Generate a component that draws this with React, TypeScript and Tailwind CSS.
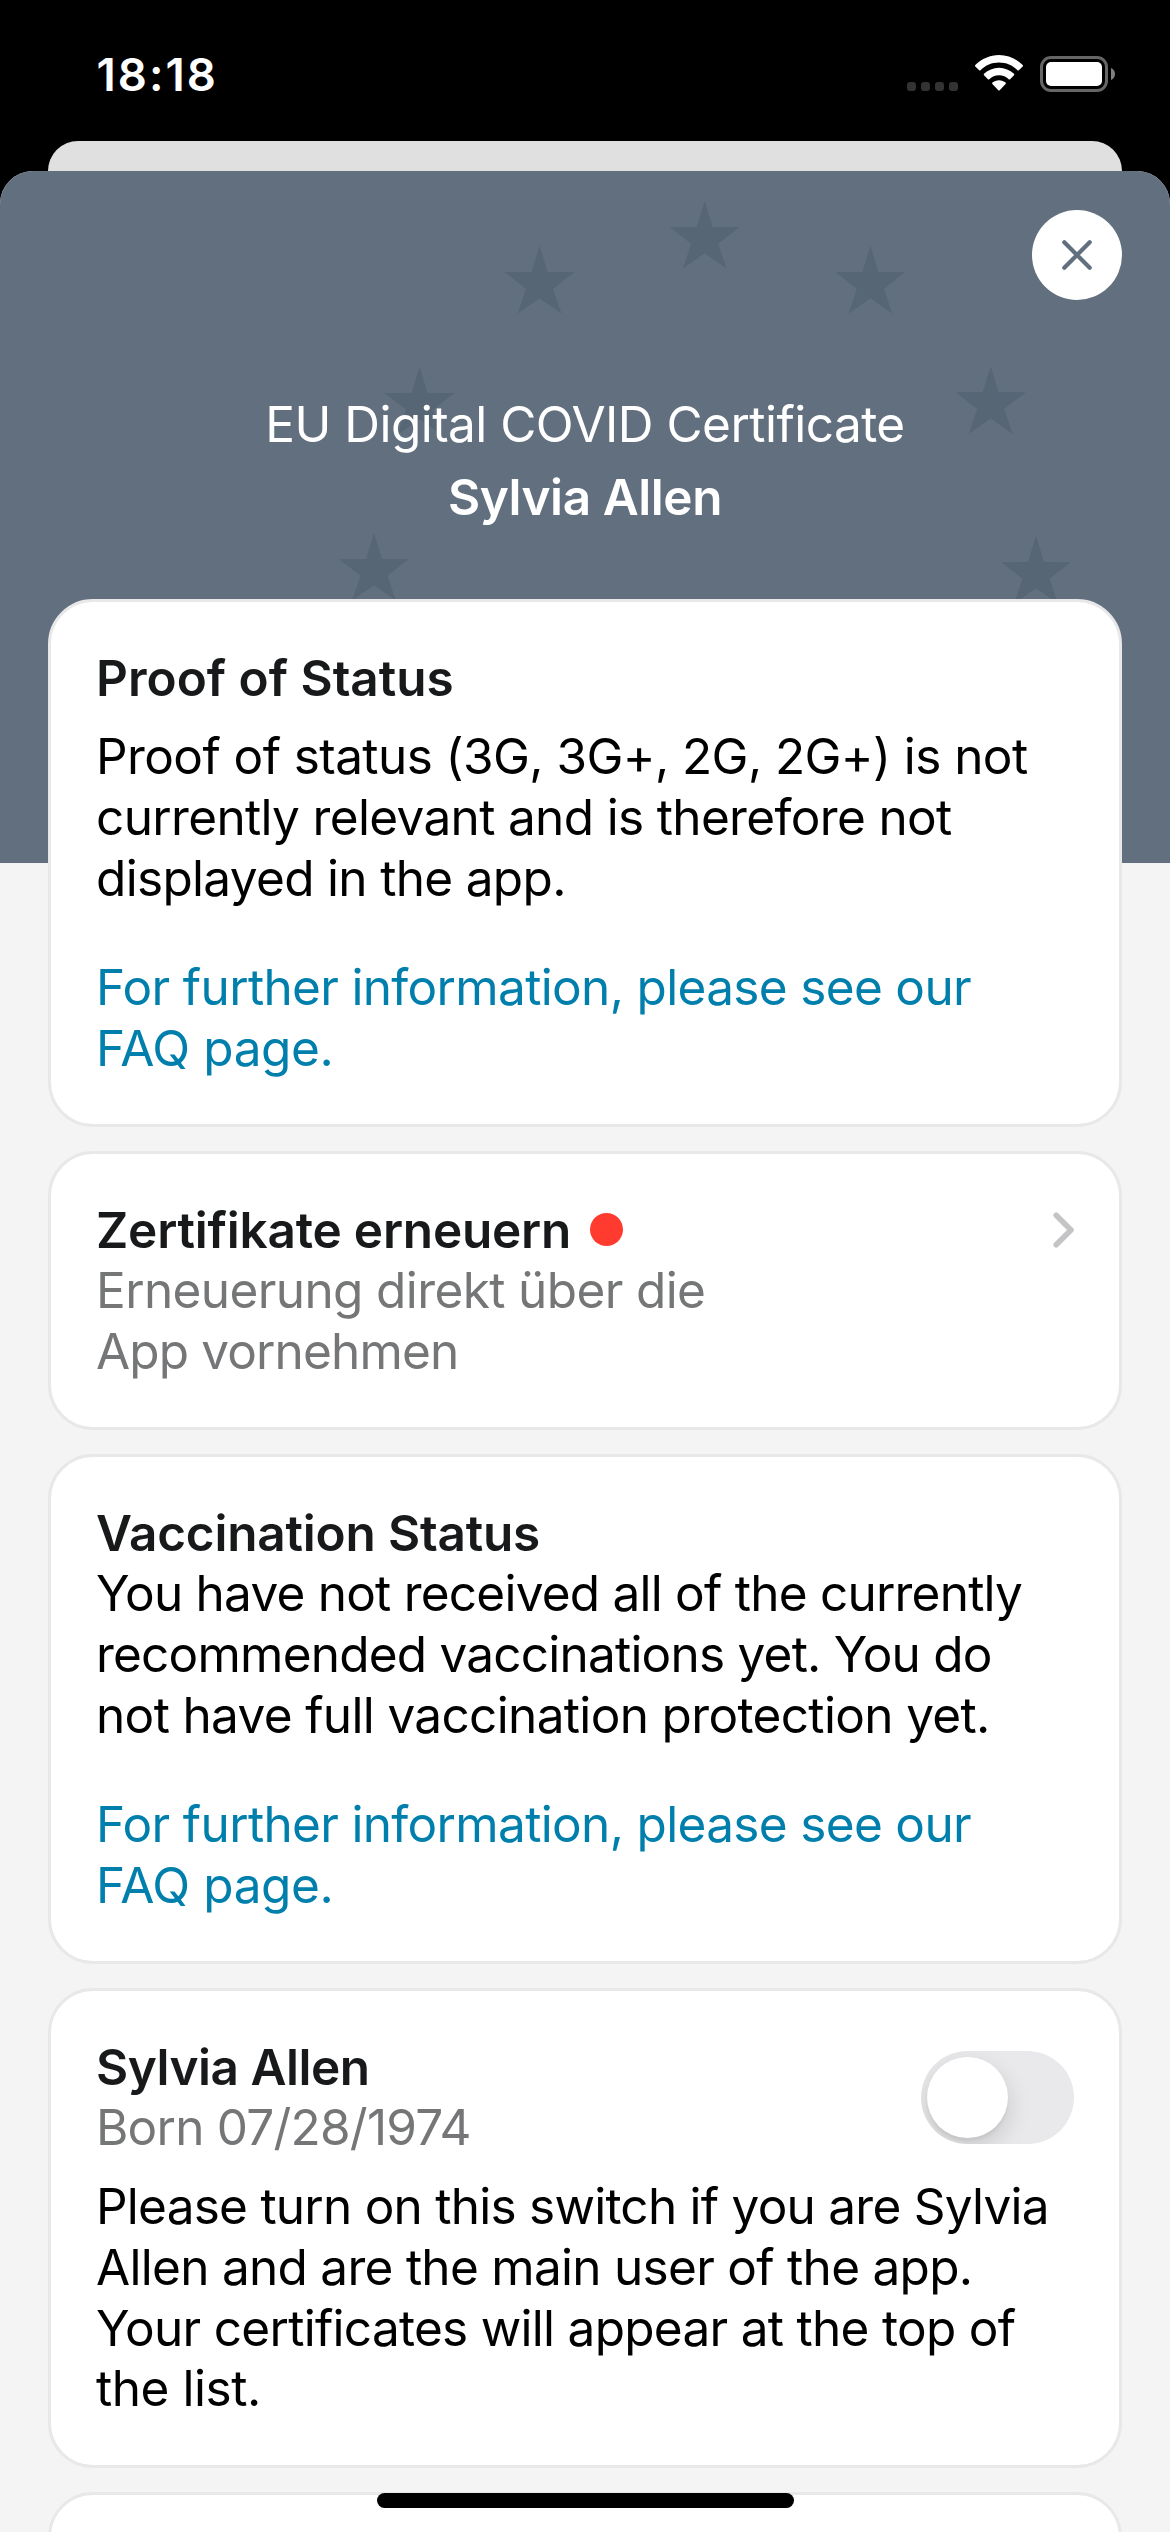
import type { ReactNode } from "react";

const STARS: [number, number][] = [
  [704.7, 30],
  [539.6, 75],
  [870.4, 75],
  [419.5, 196],
  [990.7, 195.3],
  [374, 362],
  [1036, 365],
];

function StarField() {
  return (
    <svg className="absolute inset-0" width="1170" height="692" viewBox="0 0 1170 692" fill="#566675" aria-hidden="true">
      {STARS.map(([x, y]) => (
        <polygon
          key={`${x}-${y}`}
          transform={`translate(${x} ${y})`}
          points="0,0 8,26 35,26 13.5,42.8 21.8,67.5 0,52.3 -21.8,67.5 -13.5,42.8 -35,26 -8,26"
        />
      ))}
    </svg>
  );
}

function StatusBar() {
  return (
    <div className="flex h-[141px] shrink-0 items-start justify-between pl-[96.5px] pr-[55px] text-white">
      <div className="mt-[50px] text-[45.5px] font-semibold leading-[50px] tracking-[2.05px]">18:18</div>
      <div className="mt-[55px] flex items-start">
        <div className="mt-[27px] flex gap-[5px]">
          <span className="h-[9px] w-[9px] rounded-[3px] bg-[#333333]" />
          <span className="h-[9px] w-[9px] rounded-[3px] bg-[#333333]" />
          <span className="h-[9px] w-[9px] rounded-[3px] bg-[#333333]" />
          <span className="h-[9px] w-[9px] rounded-[3px] bg-[#333333]" />
        </div>
        <svg className="ml-[17px]" width="48" height="36" viewBox="0 0 48 36" fill="#fff" aria-hidden="true">
          <path d="M24 7.6c7.1 0 13.6 2.7 18.5 7.7.4.4 1 .4 1.3 0l3.9-3.9c.4-.4.4-1 0-1.4C41.3 3.7 32.8 0 24 0S6.7 3.7.3 10c-.4.4-.4 1 0 1.4l3.9 3.9c.4.4 1 .4 1.3 0C10.4 10.3 16.900 7.6 24 7.6z" />
          <path d="M24 20.3c3.9 0 7.1 1.4 9.7 3.9.4.4 1 .4 1.4 0l3.9-4c.4-.4.4-1 0-1.4C34.9 15 29.7 12.7 24 12.7S13.100 15 9 18.8c-.4.4-.4 1 0 1.4l3.9 4c.4.4 1 .4 1.4 0 2.6-2.5 5.800-3.9 9.700-3.9z" />
          <path d="M30.600 29c.4-.4.4-1 0-1.4-1.7-1.5-4-2.4-6.600-2.4s-4.9.9-6.600 2.4c-.4.4-.4 1 0 1.4l5.900 6.300c.4.4 1 .4 1.4 0z" />
        </svg>
        <svg className="ml-[17px] mt-px" width="75" height="36" viewBox="0 0 75 36" aria-hidden="true">
          <rect x="1.5" y="1.5" width="65" height="33" rx="9.5" fill="none" stroke="#666666" strokeWidth="3" />
          <rect x="6" y="6" width="56" height="24" rx="5" fill="#fff" />
          <path d="M71 12c2.6 1.1 4 3.4 4 6s-1.4 4.9-4 6z" fill="#808080" />
        </svg>
      </div>
    </div>
  );
}

function Card({ className, children }: { className: string; children?: ReactNode }) {
  return (
    <section className={`shrink-0 rounded-[45px] border-[3px] border-[#e8e8e8] bg-white px-[45px] pt-[45.5px] ${className}`}>
      {children}
    </section>
  );
}

function Line({ className, children }: { className: string; children: ReactNode }) {
  return <span className={`block whitespace-nowrap ${className}`}>{children}</span>;
}

function FaqLink() {
  return (
    <a className="mt-[48.5px] block text-[#007fad]">
      <Line className="tracking-[-0.66px]">For further information, please see our</Line>
      <Line className="tracking-[-0.42px]">FAQ page.</Line>
    </a>
  );
}

export default function App() {
  return (
    <div className="relative flex h-[2532px] w-[1170px] flex-col overflow-hidden bg-black font-['Inter',sans-serif] text-[49.5px] leading-[60.8px] text-black">
      <StatusBar />
      <div className="mx-[48px] h-[30px] shrink-0 rounded-t-[30px] bg-[#e0e0e0]" />
      <div className="relative flex min-h-0 grow flex-col overflow-hidden rounded-t-[33px] bg-[#f4f4f4]">
        <header className="relative h-[692px] shrink-0 bg-[#616f7e] pt-[223px] text-center text-white">
          <StarField />
          <div className="relative tracking-[-0.53px]">EU Digital COVID Certificate</div>
          <h1 className="relative mt-[12px] font-semibold tracking-[-0.42px]">Sylvia Allen</h1>
          <button
            aria-label="Close"
            className="absolute right-[48px] top-[39px] flex h-[90px] w-[90px] items-center justify-center rounded-full bg-white"
          >
            <svg width="30" height="30" viewBox="0 0 30 30" fill="none" stroke="#616f7e" strokeWidth="4.2" strokeLinecap="round">
              <path d="M2.3 2.3 27.7 27.7M27.7 2.3 2.3 27.7" />
            </svg>
          </button>
        </header>

        <main className="relative mx-[48px] -mt-[264px] flex flex-col gap-[24px]">
          <Card className="h-[528px]">
            <h2 className="font-semibold tracking-[0.01px] text-[#17191a]">Proof of Status</h2>
            <p className="mt-[18px]">
              <Line className="tracking-[-0.58px]">Proof of status (3G, 3G+, 2G, 2G+) is not</Line>
              <Line className="tracking-[-0.65px]">currently relevant and is therefore not</Line>
              <Line className="tracking-[-0.67px]">displayed in the app.</Line>
            </p>
            <FaqLink />
          </Card>

          <Card className="h-[279px]">
            <div className="flex items-center">
              <h2 className="font-semibold tracking-[-0.21px] text-[#17191a]">Zertifikate erneuern</h2>
              <span className="ml-[19px] h-[33px] w-[33px] rounded-full bg-[#ff3b30]" />
              <svg className="ml-auto" width="21" height="36" viewBox="0 0 21 36" fill="none" stroke="#c4c4c6" strokeWidth="5.6" strokeLinecap="round" strokeLinejoin="round">
                <path d="M3.2 3.2 18 18 3.2 32.8" />
              </svg>
            </div>
            <p className="text-[#757677]">
              <Line className="tracking-[-0.61px]">Erneuerung direkt über die</Line>
              <Line className="tracking-[-0.86px]">App vornehmen</Line>
            </p>
          </Card>

          <Card className="h-[510px]">
            <h2 className="font-semibold tracking-[-0.2px] text-[#17191a]">Vaccination Status</h2>
            <p>
              <Line className="tracking-[-0.77px]">You have not received all of the currently</Line>
              <Line className="tracking-[-0.78px]">recommended vaccinations yet. You do</Line>
              <Line className="tracking-[-0.65px]">not have full vaccination protection yet.</Line>
            </p>
            <FaqLink />
          </Card>

          <Card className="h-[480px]">
            <div className="flex items-start justify-between">
              <div>
                <h2 className="font-semibold tracking-[-0.47px] text-[#17191a]">Sylvia Allen</h2>
                <Line className="tracking-[-0.77px] text-[#757677]">Born 07/28/1974</Line>
              </div>
              <div role="switch" aria-checked="false" className="mt-[14.5px] h-[93px] w-[153px] overflow-hidden rounded-full bg-[#e9e9eb] p-[6px]">
                <div className="h-[81px] w-[81px] rounded-full bg-white shadow-[0_9px_24px_rgba(0,0,0,0.15),0_3px_3px_rgba(0,0,0,0.05)]" />
              </div>
            </div>
            <p className="mt-[18px]">
              <Line className="tracking-[-0.75px]">Please turn on this switch if you are Sylvia</Line>
              <Line className="tracking-[-0.71px]">Allen and are the main user of the app.</Line>
              <Line className="tracking-[-0.71px]">Your certificates will appear at the top of</Line>
              <Line className="tracking-[-0.44px]">the list.</Line>
            </p>
          </Card>

          <Card className="h-[300px]" />
        </main>
      </div>
      <div className="absolute bottom-[24px] left-[377px] h-[15px] w-[417px] rounded-full bg-black" />
    </div>
  );
}
